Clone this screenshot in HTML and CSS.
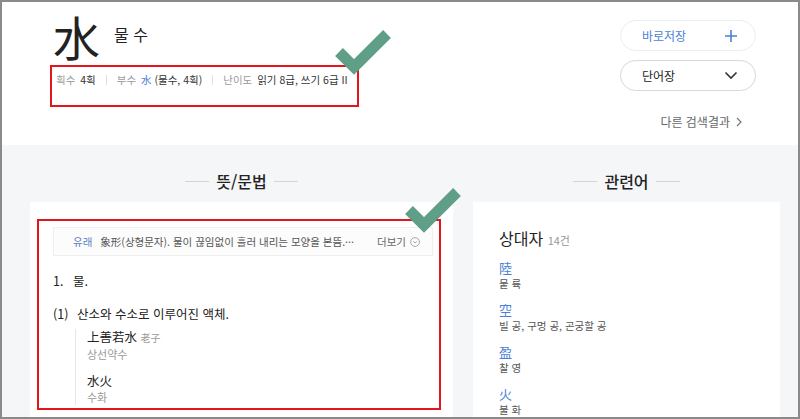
FILE: index.html
```html
<!DOCTYPE html>
<html lang="ko">
<head>
    <meta charset="UTF-8">
    <meta name="viewport" content="width=device-width, initial-scale=1.0">
    <title>水 - 한자사전</title>
    <link rel="stylesheet" href="styles.css">
</head>
<body>

<div id="page">
    <header class="entry-head">
        <div class="entry-main">
            <div class="entry-title">
                <span class="hanja">水</span>
                <span class="reading">물 수</span>
            </div>
            <div class="entry-meta">
                <span class="meta-item"><span class="label">획수</span> 4획</span>
                <span class="sep"></span>
                <span class="meta-item"><span class="label">부수</span> <span class="link">水</span> (물수, 4획)</span>
                <span class="sep"></span>
                <span class="meta-item"><span class="label">난이도</span> 읽기 8급, 쓰기 6급 II</span>
            </div>
        </div>
        <div class="entry-side">
            <button class="pill pill-save">바로저장
                <svg width="14" height="14" viewBox="0 0 14 14"><path d="M7 1v12M1 7h12" stroke="#4a7fd8" stroke-width="1.6" fill="none"/></svg>
            </button>
            <button class="pill">단어장
                <svg width="14" height="9" viewBox="0 0 14 9"><path d="M1.5 1.5l5.5 5.5 5.5-5.5" stroke="#333" stroke-width="1.6" fill="none"/></svg>
            </button>
            <a class="other-results">다른 검색결과
                <svg width="6" height="10" viewBox="0 0 6 10"><path d="M1 1l4 4-4 4" stroke="#777" stroke-width="1.2" fill="none"/></svg>
            </a>
        </div>
    </header>

    <main class="content">
        <section class="col col-mean">
            <h2 class="section-title">뜻/문법</h2>
            <div class="card">
                <div class="origin">
                    <span class="origin-label">유래</span>
                    <span class="origin-text">象形(상형문자). 물이 끊임없이 흘러 내리는 모양을 본뜸.···</span>
                    <span class="more">더보기
                        <svg width="10" height="10" viewBox="0 0 10 10"><circle cx="5" cy="5" r="4.4" stroke="#aaa" fill="none"/><path d="M3.2 4.2l1.8 1.8 1.8-1.8" stroke="#aaa" fill="none"/></svg>
                    </span>
                </div>
                <p class="mean-num"><span class="num">1.</span>물.</p>
                <p class="mean-sub"><span class="num">(1)</span>산소와 수소로 이루어진 액체.</p>
                <div class="examples">
                    <div class="example">
                        <div class="ex-word">上善若水 <span class="ex-src">老子</span></div>
                        <div class="ex-read">상선약수</div>
                    </div>
                    <div class="example">
                        <div class="ex-word">水火</div>
                        <div class="ex-read">수화</div>
                    </div>
                </div>
            </div>
        </section>

        <section class="col col-rel">
            <h2 class="section-title">관련어</h2>
            <div class="card card-rel">
                <h3 class="rel-title">상대자 <span class="count">14건</span></h3>
                <ul class="rel-list">
                    <li><span class="rel-hanja">陸</span><span class="rel-mean">뭍 륙</span></li>
                    <li><span class="rel-hanja">空</span><span class="rel-mean">빌 공, 구멍 공, 곤궁할 공</span></li>
                    <li><span class="rel-hanja">盈</span><span class="rel-mean">찰 영</span></li>
                    <li><span class="rel-hanja">火</span><span class="rel-mean">불 화</span></li>
                </ul>
            </div>
        </section>
    </main>
</div>

<!-- annotation marks drawn over the page -->
<div class="mark-box mark-box-1"></div>
<div class="mark-box mark-box-2"></div>
<svg class="check check-1" width="60" height="56" viewBox="0 0 60 56"><path d="M5 26l15 15 33-33" stroke="#5f9f88" stroke-width="11" fill="none"/></svg>
<svg class="check check-2" width="60" height="56" viewBox="0 0 60 56"><path d="M5 26l15 15 33-33" stroke="#5f9f88" stroke-width="11" fill="none"/></svg>

</body>
</html>
```

FILE: styles.css
```css
body {
    margin: 0;
    position: relative;
    font-family: "Noto Sans CJK KR", "Noto Sans", sans-serif;
    color: #222;
}
#page {
    width: 800px;
    height: 419px;
    box-sizing: border-box;
    border: 2px solid #8a8a8a;
    overflow: hidden;
    background: #f5f6f7;
}

/* header */
.entry-head {
    background: #fff;
    height: 143px;
    display: flex;
    justify-content: space-between;
    padding: 0 42px 0 51px;
    box-sizing: border-box;
}
.entry-title {
    display: flex;
    align-items: center;
    padding-top: 11px;
    height: 46px;
}
.hanja {
    font-size: 47px;
    line-height: 46px;
}
.reading {
    font-size: 16px;
    margin-left: 14px;
    margin-top: -5px;
}
.entry-meta {
    display: flex;
    align-items: center;
    margin-top: 13px;
    margin-left: 3px;
    font-size: 10.5px;
    line-height: 16px;
    color: #333;
    white-space: nowrap;
}
.label {
    color: #999;
    margin-right: 2px;
}
.link {
    color: #4a7fd8;
}
.sep {
    width: 1px;
    height: 10px;
    background: #e2e2e2;
    margin: 0 10px;
}
.entry-side {
    width: 136px;
    padding-top: 18px;
    display: flex;
    flex-direction: column;
    align-items: flex-end;
}
.pill {
    width: 136px;
    height: 31px;
    border: 1px solid #d8d8d8;
    border-radius: 16px;
    background: #fff;
    display: flex;
    align-items: center;
    justify-content: space-between;
    padding: 0 17px 0 21px;
    font-family: inherit;
    font-size: 12px;
    color: #222;
    margin-bottom: 9px;
}
.pill-save {
    border-color: #e8eef5;
    color: #4a7fd8;
}
.other-results {
    margin-top: 13px;
    margin-right: 14px;
    font-size: 12px;
    color: #666;
    display: flex;
    align-items: center;
    gap: 6px;
}

/* content */
.content {
    display: flex;
    gap: 20px;
    padding: 26px 0 0 28px;
}
.col-mean {
    width: 423px;
}
.col-rel {
    width: 307px;
}
.section-title {
    margin: 0 0 11px;
    height: 20px;
    font-size: 16px;
    font-weight: 500;
    line-height: 20px;
    display: flex;
    justify-content: center;
    align-items: center;
    gap: 7px;
}
.section-title::before, .section-title::after {
    content: "";
    width: 24px;
    height: 1px;
    background: #d4d4d4;
}
.card {
    background: #fff;
    height: 230px;
    padding: 25px 20px 0 23px;
    box-sizing: border-box;
}
.origin {
    height: 29px;
    border: 1px solid #efefef;
    background: #fcfcfc;
    display: flex;
    align-items: center;
    padding: 0 12px 0 19px;
    box-sizing: border-box;
    font-size: 10.5px;
    color: #555;
    white-space: nowrap;
}
.origin-label {
    color: #5b80c4;
    margin-right: 8px;
}
.more {
    margin-left: auto;
    display: flex;
    align-items: center;
    gap: 4px;
    color: #666;
}
.mean-num, .mean-sub {
    margin: 16px 0 0;
    font-size: 12.5px;
    line-height: 18px;
    display: flex;
}
.mean-sub {
    margin-top: 15px;
}
.num {
    width: 20px;
}
.mean-sub .num {
    width: 24px;
}
.examples {
    margin: 6px 0 0 22px;
    border-left: 1px solid #e6e6e6;
    padding-left: 11px;
}
.example + .example {
    margin-top: 11px;
}
.ex-word {
    font-size: 12.5px;
    line-height: 16px;
}
.ex-src {
    font-size: 10px;
    color: #999;
}
.ex-read {
    font-size: 11px;
    line-height: 16px;
    color: #999;
}
.card-rel {
    padding: 26px 20px 0 26px;
}
.rel-title {
    margin: 0;
    font-size: 16px;
    font-weight: normal;
    line-height: 20px;
}
.count {
    font-size: 11px;
    color: #999;
}
.rel-list {
    list-style: none;
    margin: 10px 0 0;
    padding: 0;
}
.rel-list li {
    display: flex;
    flex-direction: column;
    margin-bottom: 10px;
}
.rel-hanja {
    font-size: 13px;
    line-height: 16px;
    color: #4a7fd8;
}
.rel-mean {
    font-size: 10.5px;
    line-height: 16px;
    color: #555;
}

/* annotation overlays */
.mark-box {
    position: absolute;
    border: 2px solid #e3161e;
    box-sizing: border-box;
}
.mark-box-1 {
    left: 50px;
    top: 65px;
    width: 309px;
    height: 42px;
}
.mark-box-2 {
    left: 37px;
    top: 219px;
    width: 404px;
    height: 191px;
}
.check {
    position: absolute;
}
.check-1 {
    left: 334px;
    top: 26px;
}
.check-2 {
    left: 404px;
    top: 184px;
}
```
